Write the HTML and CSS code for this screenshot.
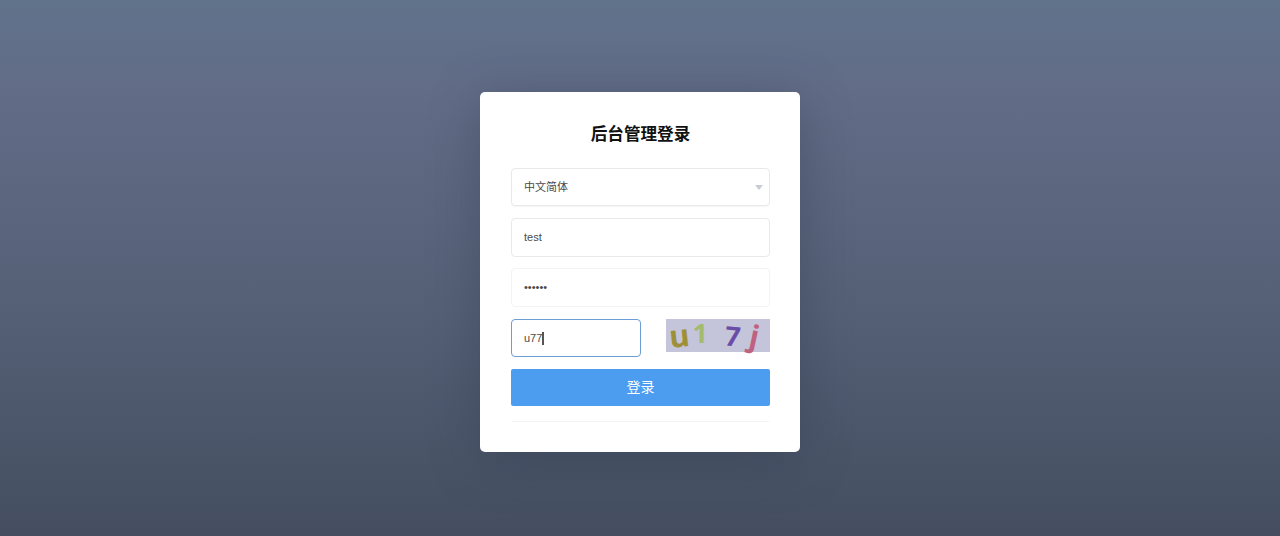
FILE: index.html
```html
<!DOCTYPE html>
<html lang="en">
<head>
    <meta charset="UTF-8">
    <meta name="viewport" content="width=device-width, initial-scale=1.0">
    <title>后台管理登录</title>
    <link rel="stylesheet" href="styles.css">
</head>
<body>
    <div class="login-card">
        <h1 class="login-title">后台管理登录</h1>

        <div class="field select-field">
            <span>中文简体</span>
            <i class="select-arrow"></i>
        </div>

        <input class="field field-tall" type="text" value="test">
        <input class="field field-tall field-plain" type="password" value="123456">

        <div class="captcha-row">
            <div class="field captcha-input">u77<span class="caret"></span></div>
            <div class="captcha-img">
                <span class="captcha-char char-u">u</span>
                <span class="captcha-char char-1">1</span>
                <span class="captcha-char char-7">7</span>
                <span class="captcha-char char-j">j</span>
            </div>
        </div>

        <button class="login-btn">登录</button>
        <div class="divider"></div>
    </div>
</body>
</html>
```

FILE: styles.css
```css
* { box-sizing: border-box; }

html, body { height: 100%; }

body {
    margin: 0;
    padding-top: 92px;
    display: flex;
    justify-content: center;
    align-items: flex-start;
    overflow: hidden;
    background: linear-gradient(180deg, #61728b 0%, #626b86 20%, #545f75 60%, #444e60 100%);
    font-family: "Liberation Sans", "Noto Sans CJK SC", sans-serif;
}

.login-card {
    width: 320px;
    height: 360px;
    padding: 31px 30px 0 31px;
    background: #fff;
    border-radius: 5px;
    box-shadow: 0 8px 50px rgba(45, 55, 75, 0.4);
}

.login-title {
    margin: 0 0 22px;
    font-size: 16.6px;
    font-weight: 700;
    line-height: 23px;
    text-align: center;
    color: #111;
}

.field {
    display: block;
    width: 259px;
    height: 38px;
    margin-bottom: 12px;
    padding: 0 12px;
    border: 1px solid #e8e9ec;
    border-radius: 4px;
    background: #fff;
    font-family: inherit;
    font-size: 11px;
    line-height: 36px;
    color: #4a4a4a;
    outline: none;
}

.field-tall { height: 39px; margin-bottom: 11px; padding-bottom: 2px; }

.field-plain { margin-bottom: 12px; border-color: #f2f3f5; }

.select-field {
    position: relative;
    box-shadow: 0 1px 1px rgba(0, 0, 0, 0.04);
}

.select-arrow {
    position: absolute;
    right: 6px;
    top: 16px;
    border: 4.5px solid transparent;
    border-top: 5px solid #c8ccd2;
    border-bottom: 0;
}

.captcha-row {
    display: flex;
    justify-content: space-between;
    align-items: flex-start;
    width: 259px;
    height: 38px;
    margin-bottom: 12px;
}

.captcha-input {
    width: 130px;
    margin: 0;
    border-color: #6c9ed6;
}

.caret {
    display: inline-block;
    width: 2px;
    height: 13px;
    vertical-align: -3px;
    background: #555;
}

/* distorted captcha letters */
.captcha-img {
    display: flex;
    align-items: center;
    flex-shrink: 0;
    width: 104px;
    height: 33px;
    padding-left: 3px;
    background: #c4c4da;
}

.captcha-char {
    font-family: "Open Sans", sans-serif;
    font-size: 27px;
    font-weight: 700;
    line-height: 33px;
}

.char-u { color: #9d9038; font-size: 31px; transform: rotate(-6deg); }
.char-1 { margin-left: 3px; color: #a3bb6e; transform: translateY(-3px); }
.char-7 { margin-left: 17px; color: #6a4da6; transform: rotate(6deg); }
.char-j { margin-left: 10px; color: #bf6280; font-size: 30px; transform: rotate(12deg); }

.login-btn {
    display: block;
    width: 259px;
    height: 37px;
    padding: 0 0 4px;
    border: none;
    border-radius: 2px;
    background: #4c9df0;
    color: #fff;
    font-family: inherit;
    font-size: 14px;
}

.divider {
    width: 257px;
    margin: 15px auto 0;
    border-top: 1px solid #f2f3f5;
}
```
